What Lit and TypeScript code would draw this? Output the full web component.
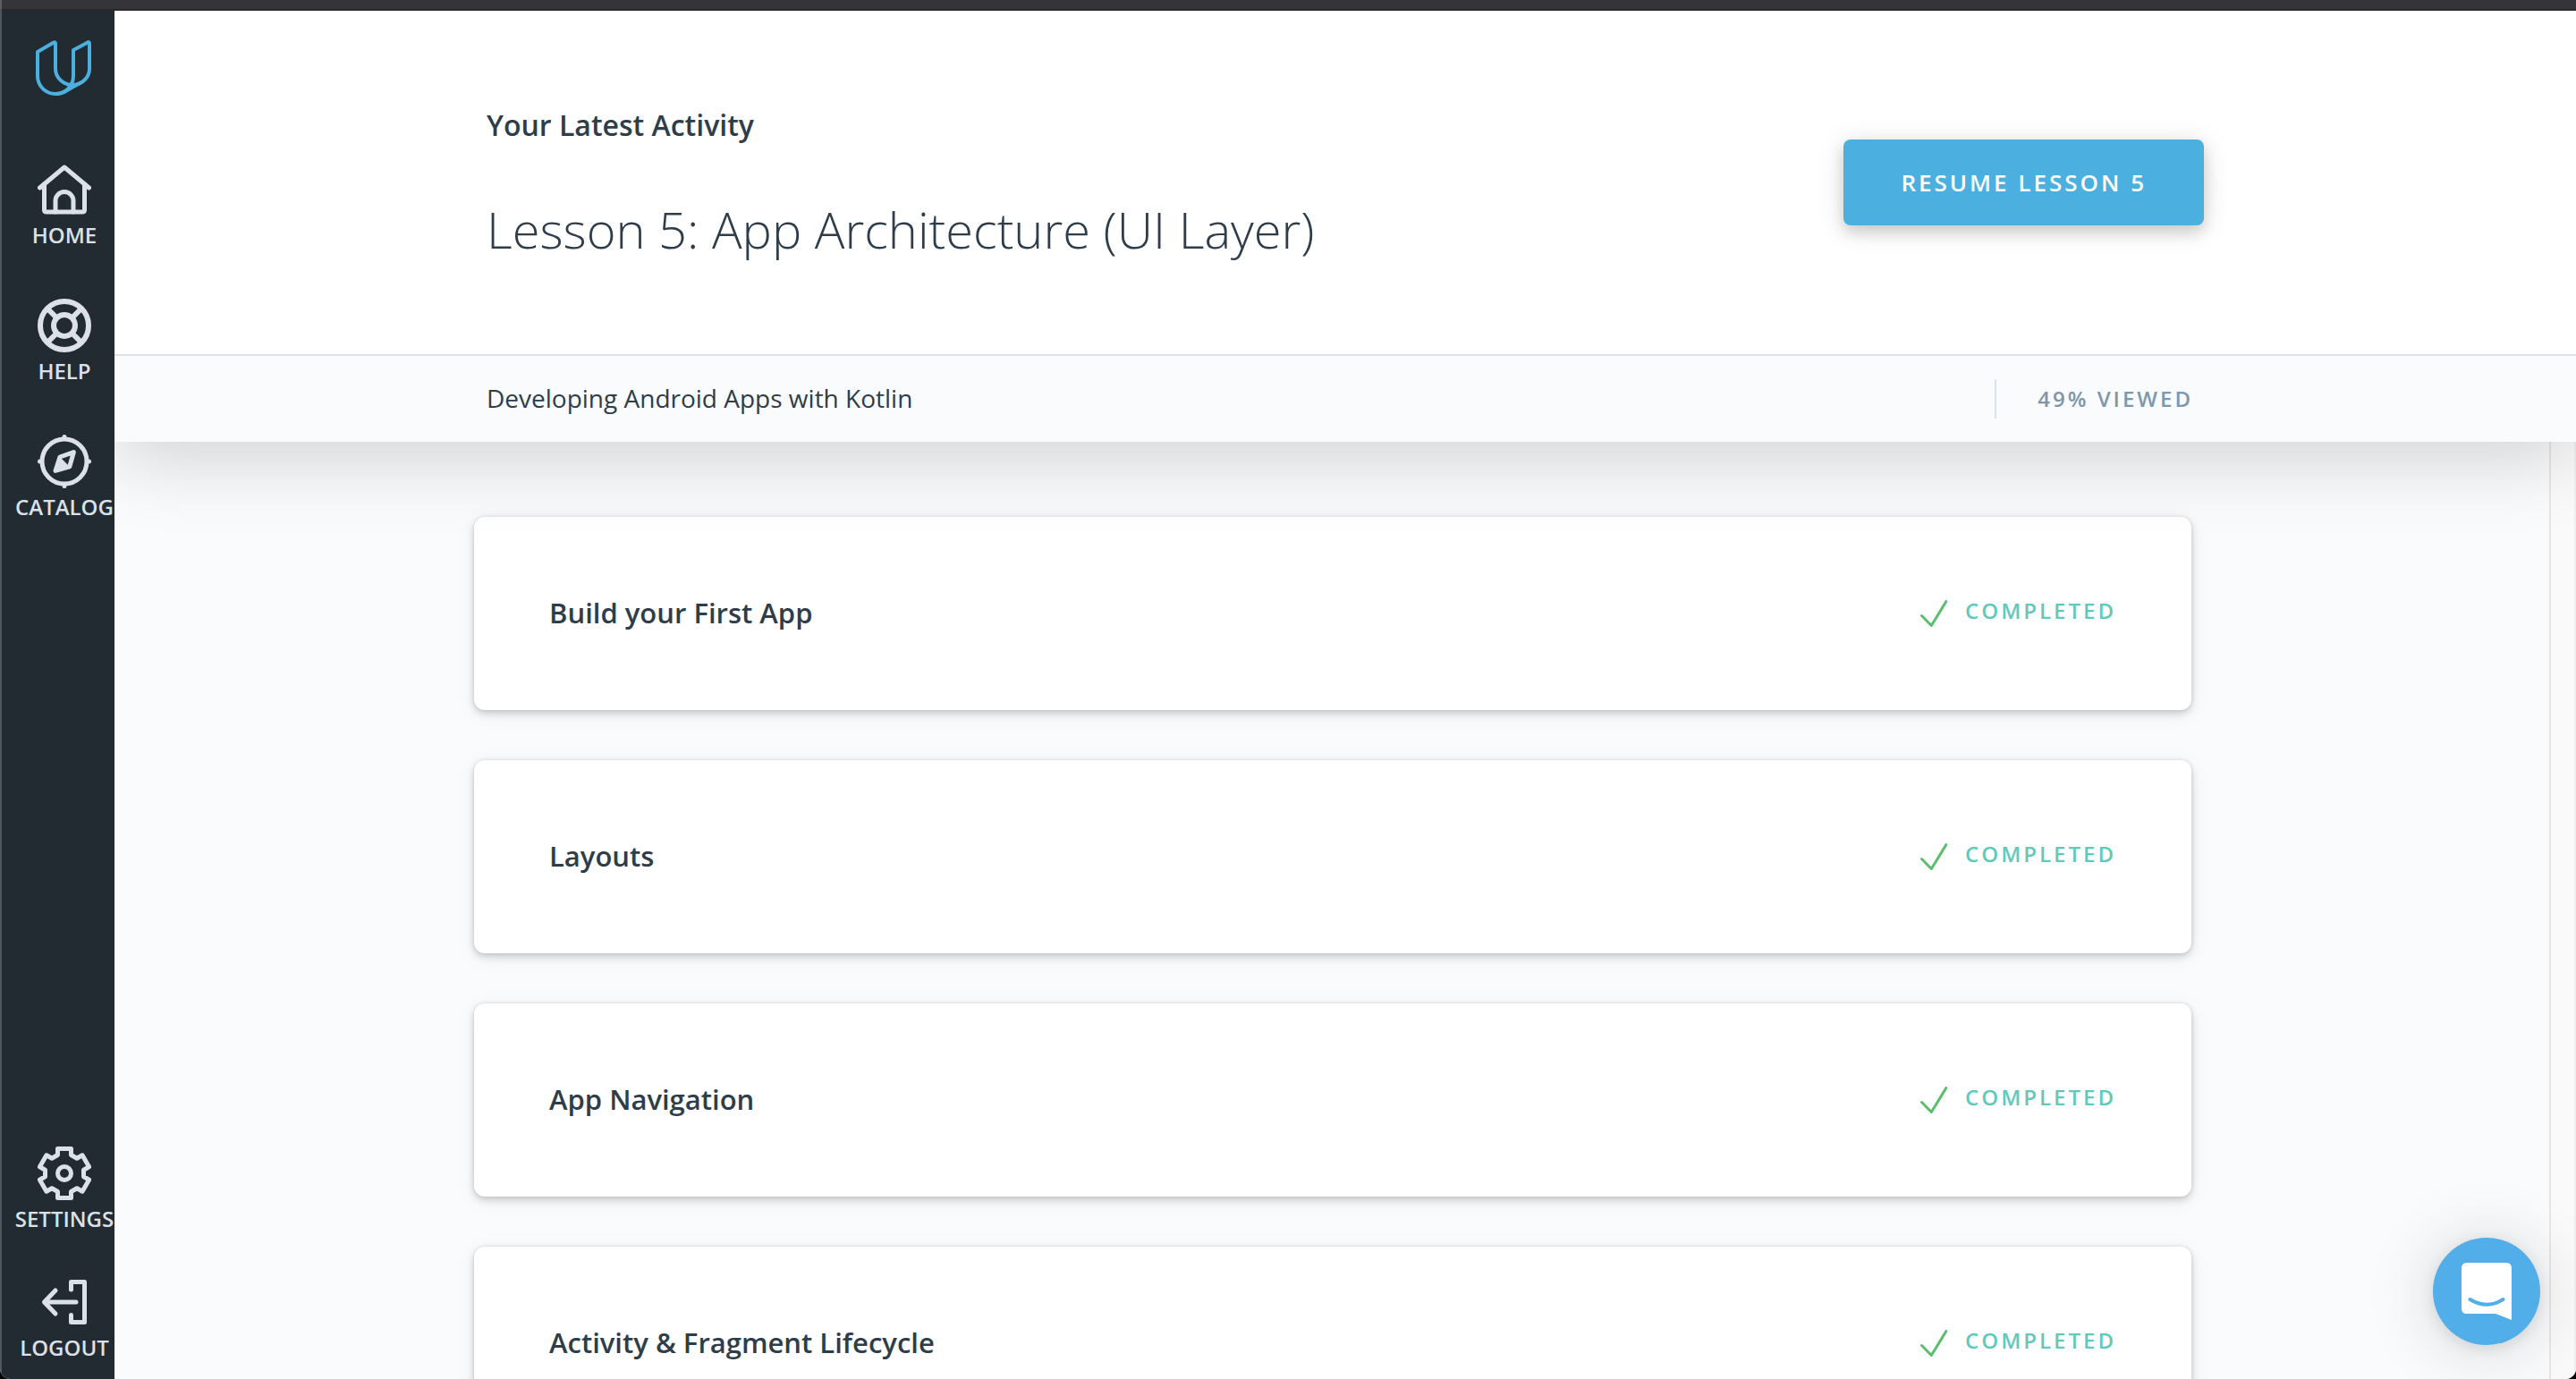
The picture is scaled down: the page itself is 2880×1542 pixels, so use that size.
import { LitElement, html, css, svg } from "lit";
import { customElement, property } from "lit/decorators.js";

const toothPath = (): string => {
  const points: string[] = [];
  for (let i = 0; i < 6; i++) {
    const a = (i * Math.PI) / 3;
    for (const [x, y] of [[-7.5, -20.5], [-7.5, -27.5], [7.5, -27.5], [7.5, -20.5]]) {
      const px = 30 + x * Math.cos(a) - y * Math.sin(a);
      const py = 30 + x * Math.sin(a) + y * Math.cos(a);
      points.push(`${px.toFixed(2)} ${py.toFixed(2)}`);
    }
  }
  return `M${points.join("L")}Z`;
};

const icons = {
  home: svg`
    <path d="M2.5 28 30 5 57.5 28" />
    <path d="M7.5 24V52.5Q7.5 55 10 55H50Q52.5 55 52.5 52.5V24" />
    <path d="M20 55V42.5A10 10 0 0 1 40 42.5V55" />`,
  help: svg`
    <circle cx="30" cy="30" r="27" stroke-width="6" />
    <circle cx="30" cy="30" r="12" stroke-width="6" />
    <path stroke-width="6" stroke-linecap="butt" d="M12 12 21 21M48 12 39 21M12 48 21 39M48 48 39 39" />`,
  catalog: svg`
    <circle cx="30" cy="30" r="25" />
    <path d="M30 2.5V4M30 56V57.5M2.5 30H4M56 30H57.5" />
    <path d="M40.4 19.6 35.8 35.8 20 40.4 25 25Z" />
    <path fill="currentColor" stroke="none" d="M25 25 36 36 20 40.4Z" />`,
  settings: svg`
    <path d="${toothPath()}" />
    <circle cx="30" cy="30" r="7.5" />`,
  logout: svg`
    <path d="M37.5 16V7.5H52.5V52.5H37.5V44.5" />
    <path d="M43 30H8M20 17 7.5 30 20 43" />`,
};

type IconName = keyof typeof icons;

@customElement("nav-item")
class NavItem extends LitElement {
  @property() icon: IconName = "home";
  @property() label = "";

  static styles = css`
    :host {
      display: block;
    }
    .link {
      display: flex;
      flex-direction: column;
      align-items: center;
      color: #dce1e9;
      text-decoration: none;
      font-size: 24px;
      line-height: 42px;
      font-weight: 600;
      white-space: nowrap;
    }
    .icon {
      width: 60px;
      height: 60px;
      fill: none;
      stroke: currentColor;
      stroke-width: 5px;
      stroke-linecap: round;
      stroke-linejoin: round;
    }
    .icon [stroke-width="6"] {
      stroke-width: 6px;
    }
  `;

  render() {
    return html`<a class="link" href="#${this.icon}">
      <svg class="icon" viewBox="0 0 60 60" aria-hidden="true">${icons[this.icon]}</svg>
      <span>${this.label}</span>
    </a>`;
  }
}

@customElement("lesson-card")
class LessonCard extends LitElement {
  @property() name = "";

  static styles = css`
    :host {
      display: block;
    }
    .card {
      display: flex;
      justify-content: space-between;
      align-items: center;
      min-height: 216px;
      box-sizing: border-box;
      padding: 0 84px;
      border-radius: 12px;
      background: #fff;
      color: #2e3d49;
      text-decoration: none;
      box-shadow: 0 4px 8px rgba(0, 0, 0, 0.16), 0 4px 24px rgba(0, 0, 0, 0.06), 0 0 4px rgba(0, 0, 0, 0.1);
    }
    .name {
      margin: 0;
      padding-bottom: 2px;
      font-size: 31px;
      line-height: 40px;
      font-weight: 600;
    }
    .status {
      display: flex;
      align-items: flex-start;
      gap: 20px;
      color: #5fcabb;
      font-size: 24px;
      line-height: 24px;
      font-weight: 600;
      letter-spacing: 3px;
    }
    .check {
      width: 30px;
      height: 30px;
      fill: none;
      stroke: #57bf6d;
      stroke-width: 3px;
      stroke-linecap: round;
      stroke-linejoin: round;
    }
  `;

  render() {
    return html`<a class="card" href="#lesson">
      <h2 class="name">${this.name}</h2>
      <span class="status">
        <svg class="check" viewBox="0 0 30 30" aria-hidden="true"><path d="M1.5 17.5 12.3 28.5 28.8 1.5" /></svg>
        COMPLETED
      </span>
    </a>`;
  }
}

@customElement("app-root")
class AppRoot extends LitElement {
  static styles = css`
    :host {
      display: block;
      height: 100vh;
      overflow: hidden;
      background: #000;
      color: #2e3d49;
      font-family: "Open Sans", "Noto Sans", sans-serif;
    }
    .window {
      display: grid;
      grid-template-columns: 128px 1fr;
      grid-template-rows: 12px 1fr;
      height: 100%;
      position: relative;
      overflow: hidden;
      border-radius: 0 0 12px 12px;
      background: #fafbfd;
    }
    .window::after {
      content: "";
      position: absolute;
      inset: 0;
      border-left: 2px solid rgba(255, 255, 255, 0.2);
      pointer-events: none;
      z-index: 5;
    }
    .titlebar {
      grid-column: 1 / -1;
      box-sizing: border-box;
      background: #353539;
      border-bottom: 2px solid #29292c;
      z-index: 4;
    }
    .sidebar {
      display: flex;
      flex-direction: column;
      box-sizing: border-box;
      padding: 32px 0 14px 16px;
      background: #222b32;
      z-index: 3;
      min-height: 0;
    }
    .brand {
      display: flex;
      justify-content: center;
      margin-bottom: 74px;
    }
    .logo {
      width: 64px;
      height: 64px;
      fill: none;
      stroke: #4bb0e0;
      stroke-width: 4px;
      stroke-linejoin: round;
    }
    .nav {
      display: flex;
      flex-direction: column;
      gap: 50px;
    }
    .nav-bottom {
      margin-top: auto;
      gap: 42px;
    }
    .page {
      display: flex;
      flex-direction: column;
      min-width: 0;
      min-height: 0;
    }
    .top {
      position: relative;
      z-index: 2;
      background: #fff;
      box-shadow: 0 20px 80px rgba(0, 0, 0, 0.16);
    }
    .inner {
      display: flex;
      justify-content: space-between;
      align-items: center;
      max-width: 1920px;
      margin: 0 auto;
    }
    .activity {
      padding: 104px 0;
    }
    .eyebrow {
      margin: 0 0 56px;
      font-size: 32px;
      line-height: 48px;
      font-weight: 600;
    }
    .title {
      margin: 0;
      font-size: 56px;
      line-height: 72px;
      font-weight: 300;
    }
    .resume {
      font-family: inherit;
      height: 96px;
      padding: 0 64px;
      border: 0;
      border-radius: 8px;
      background: #4bb0e0;
      color: #fff;
      font-size: 26px;
      font-weight: 600;
      letter-spacing: 3px;
      box-shadow: 0 8px 16px rgba(0, 0, 0, 0.14), 0 4px 32px rgba(0, 0, 0, 0.12);
    }
    .course {
      background: #fafbfd;
      border-top: 2px solid #dbe2e8;
    }
    .course-name {
      margin: 0;
      padding-bottom: 2px;
      font-size: 28px;
      line-height: 94px;
    }
    .viewed {
      padding: 0 12px 0 46px;
      border-left: 2px solid #dbe2e8;
      color: #7d97ad;
      font-size: 24px;
      line-height: 44px;
      font-weight: 600;
      letter-spacing: 3px;
    }
    .body {
      display: flex;
      flex: 1;
      min-height: 0;
    }
    .lessons {
      flex: 1;
      min-width: 0;
      overflow: hidden;
      padding: 84px 0 0 2px;
      margin: 0;
      list-style: none;
    }
    .lesson {
      max-width: 1920px;
      margin: 0 auto 56px;
    }
    .track {
      box-sizing: border-box;
      width: 30px;
      background: #fafafa;
      border-left: 2px solid #e6e7e9;
      border-right: 2px solid #efefef;
    }
    .chat {
      position: absolute;
      right: 40px;
      bottom: 38px;
      width: 120px;
      height: 120px;
      padding: 0;
      border: 0;
      border-radius: 50%;
      background: #52aee8;
      box-shadow: 0 4px 16px rgba(0, 0, 0, 0.1), 0 4px 80px rgba(0, 0, 0, 0.16);
      z-index: 3;
    }
    .bubble {
      display: block;
      width: 120px;
      height: 120px;
    }
  `;

  private lessons = ["Build your First App", "Layouts", "App Navigation", "Activity & Fragment Lifecycle"];

  render() {
    return html`
      <div class="window">
        <div class="titlebar"></div>
        <aside class="sidebar">
          <a class="brand" href="#home" aria-label="Udacity">
            <svg class="logo" viewBox="40 43 64 64" aria-hidden="true">
              <path d="M42 57 60 46.6Q62 45.6 62 48V76C62 86 71 94 81 94C91 94 100 86 100 76V48Q100 45.4 98 46.4L82 55V84C82 95 73 104 62 104C51 104 42 95 42 84Z" />
              <path d="M62 104Q69 104 75 100L90 91.4" />
            </svg>
          </a>
          <nav class="nav" aria-label="Main">
            <nav-item icon="home" label="HOME"></nav-item>
            <nav-item icon="help" label="HELP"></nav-item>
            <nav-item icon="catalog" label="CATALOG"></nav-item>
          </nav>
          <nav class="nav nav-bottom" aria-label="Account">
            <nav-item icon="settings" label="SETTINGS"></nav-item>
            <nav-item icon="logout" label="LOGOUT"></nav-item>
          </nav>
        </aside>
        <main class="page">
          <header class="top">
            <div class="inner">
              <div class="activity">
                <p class="eyebrow">Your Latest Activity</p>
                <h1 class="title">Lesson 5: App Architecture (UI Layer)</h1>
              </div>
              <button class="resume" type="button">RESUME LESSON 5</button>
            </div>
            <div class="course">
              <div class="inner">
                <p class="course-name">Developing Android Apps with Kotlin</p>
                <span class="viewed">49% VIEWED</span>
              </div>
            </div>
          </header>
          <div class="body">
            <ul class="lessons">
              ${this.lessons.map((name) => html`<li class="lesson"><lesson-card name=${name}></lesson-card></li>`)}
            </ul>
            <div class="track"></div>
          </div>
        </main>
        <button class="chat" type="button" aria-label="Open chat">
          <svg class="bubble" viewBox="0 0 120 120" aria-hidden="true">
            <path fill="#fff" d="M38 28H82Q88 28 88 34V92L70 85H38Q32 85 32 79V34Q32 28 38 28Z" />
            <path fill="none" stroke="#52aee8" stroke-width="4" stroke-linecap="round" d="M41.5 69Q60 80.5 78.5 69" />
          </svg>
        </button>
      </div>
    `;
  }
}
